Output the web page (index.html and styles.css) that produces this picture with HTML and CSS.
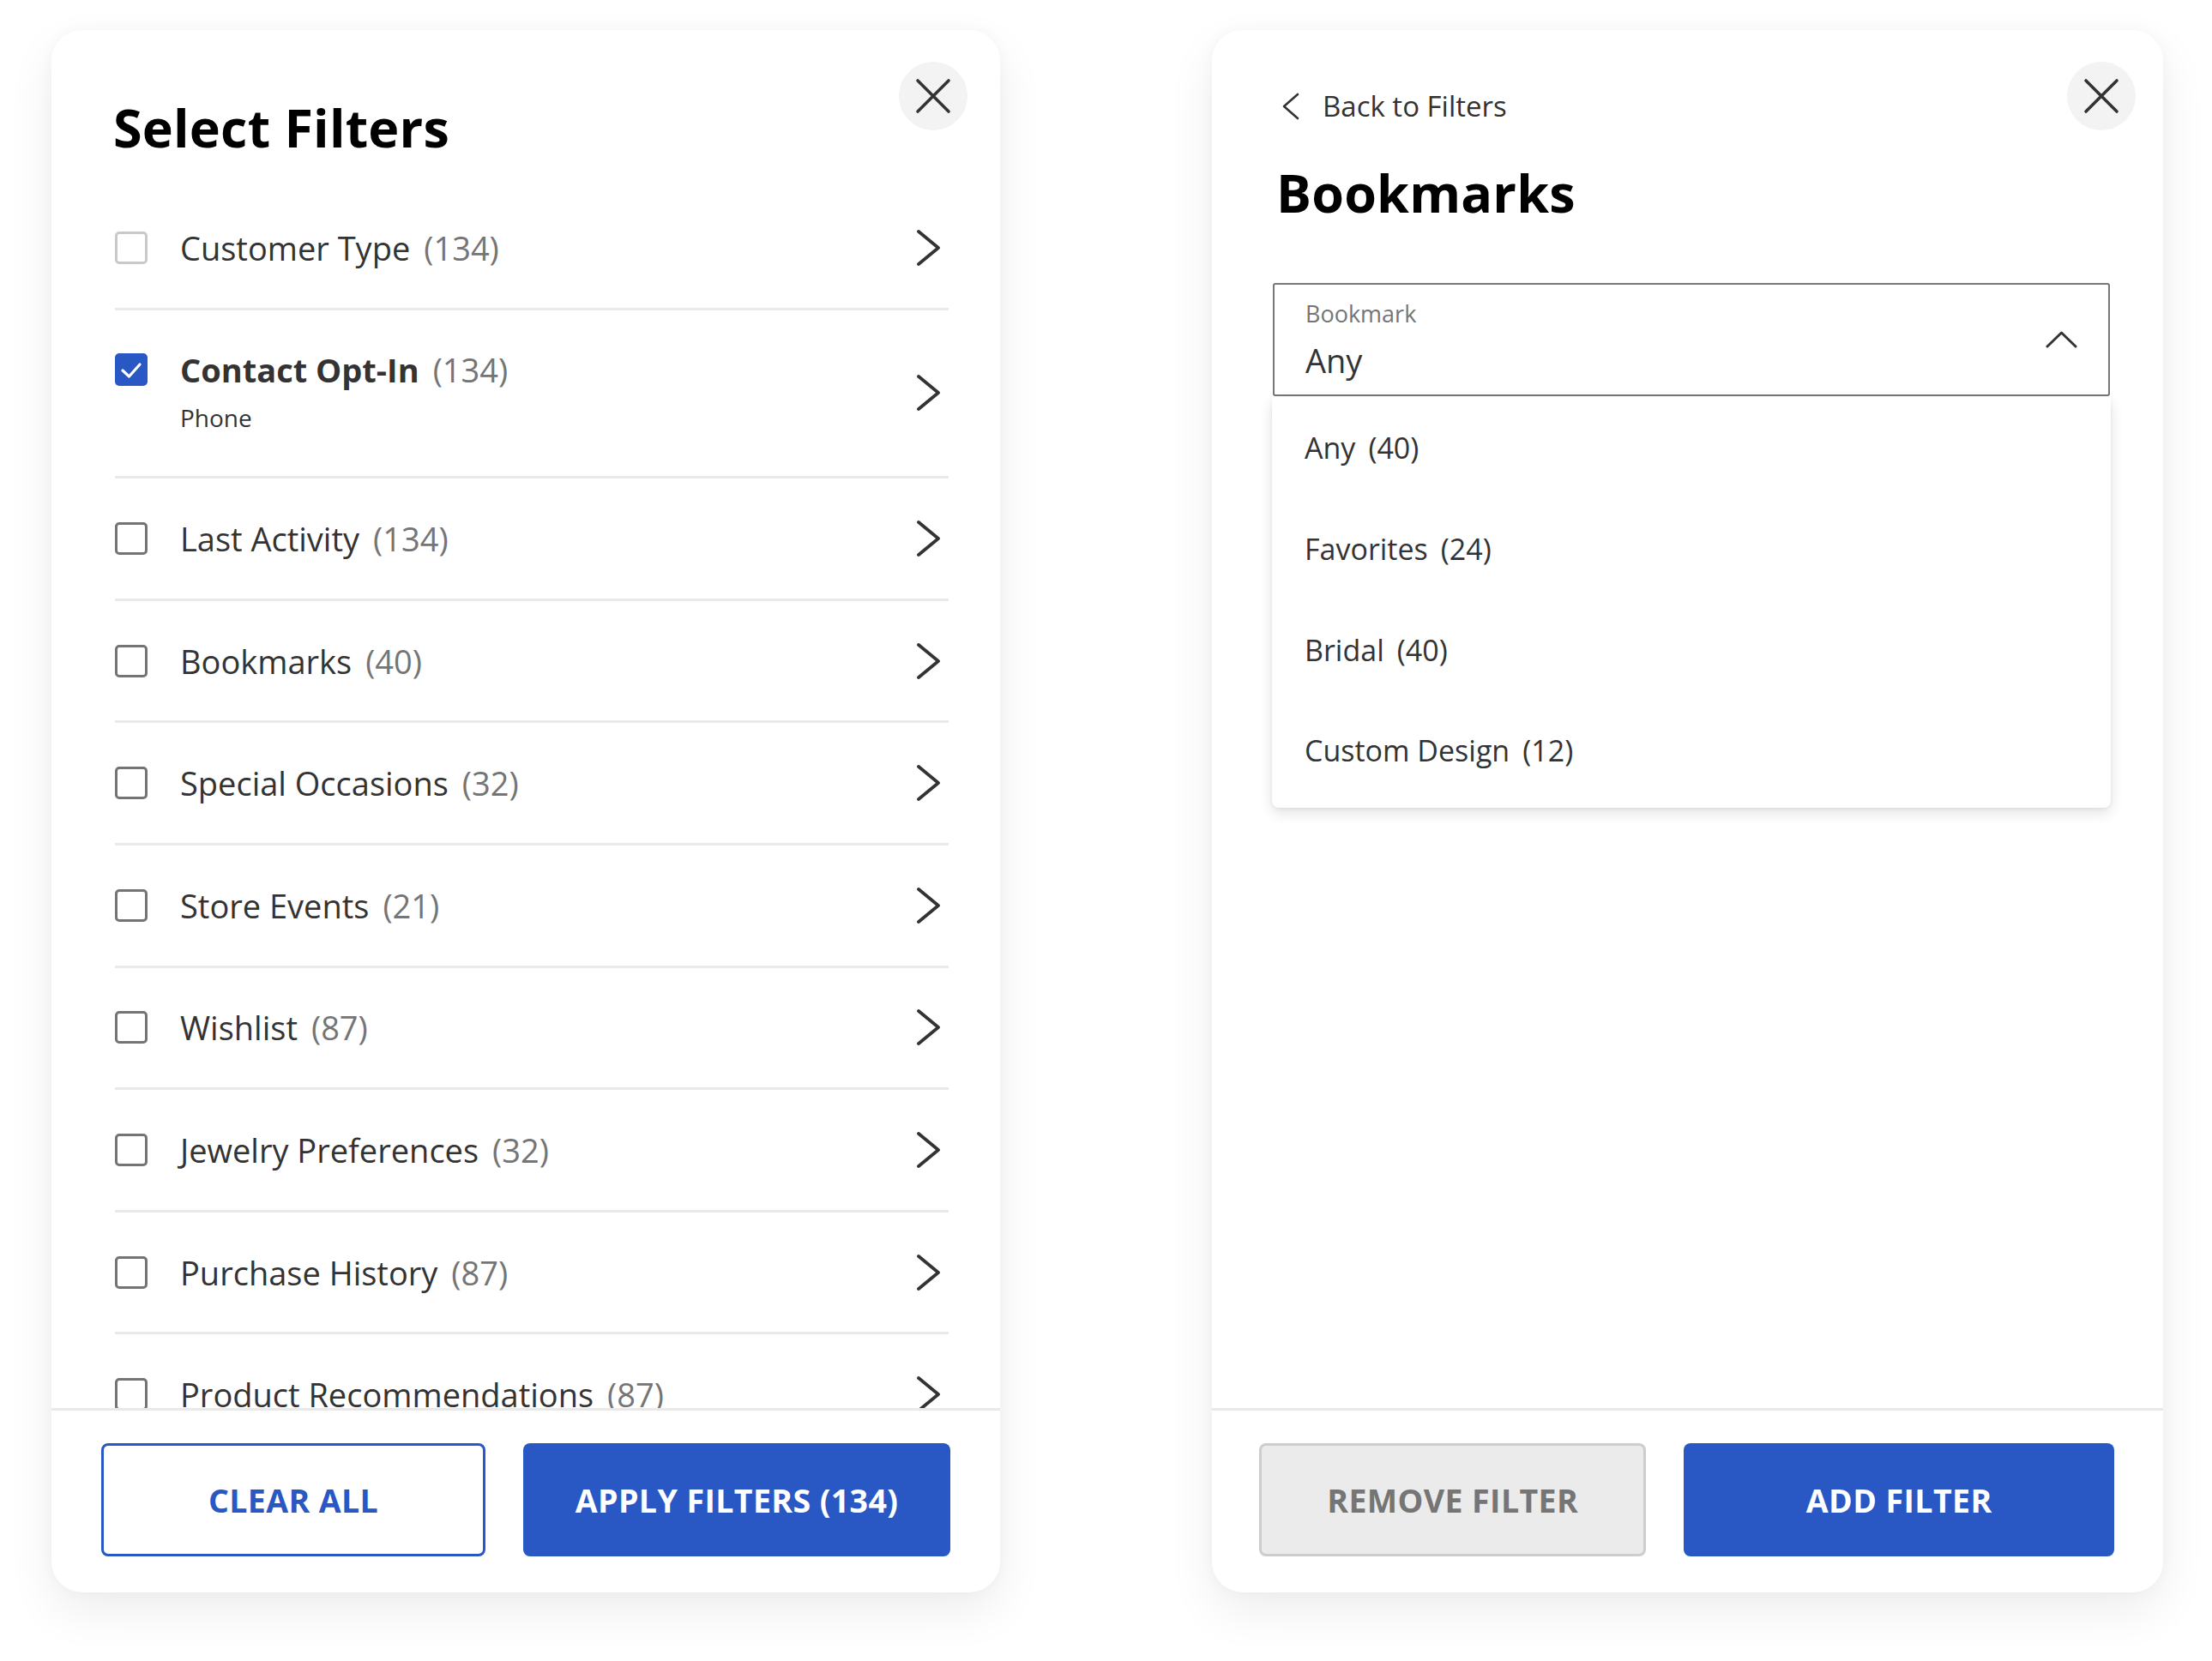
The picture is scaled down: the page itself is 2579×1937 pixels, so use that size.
FILE: index.html
```html
<!DOCTYPE html>
<html lang="en">
<head>
<meta charset="utf-8">
<title>Filters</title>
<link rel="stylesheet" href="styles.css">
</head>
<body>
<div class="stage">
  <section class="panel panel-left">
    <button class="close close-left" aria-label="Close">
      <svg viewBox="0 0 42 42" width="42" height="42"><path d="M3 3 L39 39 M39 3 L3 39" fill="none" stroke="#333" stroke-width="3.6" stroke-linecap="round"/></svg>
    </button>
    <h1 class="title">Select Filters</h1>
    <div class="list">
      <div class="row">
        <span class="cb cb-light"></span>
        <div class="label"><div class="line"><span class="name">Customer Type</span><span class="count">(134)</span></div></div>
        <svg class="chev" viewBox="0 0 30 42" width="30" height="42"><path d="M3 2 L26 21 L3 40" fill="none" stroke="#333" stroke-width="3.8" stroke-linecap="round" stroke-linejoin="round"/></svg>
      </div>
      <div class="row">
        <span class="cb cb-checked"><svg viewBox="0 0 38 38" width="38" height="38"><path d="M9 20 L16.5 27 L29 13" fill="none" stroke="#fff" stroke-width="3.2" stroke-linecap="round" stroke-linejoin="round"/></svg></span>
        <div class="label"><div class="line"><span class="name bold">Contact Opt-In</span><span class="count">(134)</span></div><div class="sub">Phone</div></div>
        <svg class="chev" viewBox="0 0 30 42" width="30" height="42"><path d="M3 2 L26 21 L3 40" fill="none" stroke="#333" stroke-width="3.8" stroke-linecap="round" stroke-linejoin="round"/></svg>
      </div>
      <div class="row">
        <span class="cb"></span>
        <div class="label"><div class="line"><span class="name">Last Activity</span><span class="count">(134)</span></div></div>
        <svg class="chev" viewBox="0 0 30 42" width="30" height="42"><path d="M3 2 L26 21 L3 40" fill="none" stroke="#333" stroke-width="3.8" stroke-linecap="round" stroke-linejoin="round"/></svg>
      </div>
      <div class="row">
        <span class="cb"></span>
        <div class="label"><div class="line"><span class="name">Bookmarks</span><span class="count">(40)</span></div></div>
        <svg class="chev" viewBox="0 0 30 42" width="30" height="42"><path d="M3 2 L26 21 L3 40" fill="none" stroke="#333" stroke-width="3.8" stroke-linecap="round" stroke-linejoin="round"/></svg>
      </div>
      <div class="row">
        <span class="cb"></span>
        <div class="label"><div class="line"><span class="name">Special Occasions</span><span class="count">(32)</span></div></div>
        <svg class="chev" viewBox="0 0 30 42" width="30" height="42"><path d="M3 2 L26 21 L3 40" fill="none" stroke="#333" stroke-width="3.8" stroke-linecap="round" stroke-linejoin="round"/></svg>
      </div>
      <div class="row">
        <span class="cb"></span>
        <div class="label"><div class="line"><span class="name">Store Events</span><span class="count">(21)</span></div></div>
        <svg class="chev" viewBox="0 0 30 42" width="30" height="42"><path d="M3 2 L26 21 L3 40" fill="none" stroke="#333" stroke-width="3.8" stroke-linecap="round" stroke-linejoin="round"/></svg>
      </div>
      <div class="row">
        <span class="cb"></span>
        <div class="label"><div class="line"><span class="name">Wishlist</span><span class="count">(87)</span></div></div>
        <svg class="chev" viewBox="0 0 30 42" width="30" height="42"><path d="M3 2 L26 21 L3 40" fill="none" stroke="#333" stroke-width="3.8" stroke-linecap="round" stroke-linejoin="round"/></svg>
      </div>
      <div class="row">
        <span class="cb"></span>
        <div class="label"><div class="line"><span class="name">Jewelry Preferences</span><span class="count">(32)</span></div></div>
        <svg class="chev" viewBox="0 0 30 42" width="30" height="42"><path d="M3 2 L26 21 L3 40" fill="none" stroke="#333" stroke-width="3.8" stroke-linecap="round" stroke-linejoin="round"/></svg>
      </div>
      <div class="row">
        <span class="cb"></span>
        <div class="label"><div class="line"><span class="name">Purchase History</span><span class="count">(87)</span></div></div>
        <svg class="chev" viewBox="0 0 30 42" width="30" height="42"><path d="M3 2 L26 21 L3 40" fill="none" stroke="#333" stroke-width="3.8" stroke-linecap="round" stroke-linejoin="round"/></svg>
      </div>
      <div class="row">
        <span class="cb"></span>
        <div class="label"><div class="line"><span class="name">Product Recommendations</span><span class="count">(87)</span></div></div>
        <svg class="chev" viewBox="0 0 30 42" width="30" height="42"><path d="M3 2 L26 21 L3 40" fill="none" stroke="#333" stroke-width="3.8" stroke-linecap="round" stroke-linejoin="round"/></svg>
      </div>
    </div>
    <div class="footer footer-left">
      <button class="btn btn-outline">CLEAR ALL</button>
      <button class="btn btn-primary">APPLY FILTERS (134)</button>
    </div>
  </section>

  <section class="panel panel-right">
    <button class="close close-right" aria-label="Close">
      <svg viewBox="0 0 42 42" width="42" height="42"><path d="M3 3 L39 39 M39 3 L3 39" fill="none" stroke="#333" stroke-width="3.6" stroke-linecap="round"/></svg>
    </button>
    <div class="body-right">
      <div class="back">
        <svg class="back-chev" viewBox="0 0 22 32" width="22" height="32"><path d="M19 2 L3 16 L19 30" fill="none" stroke="#333" stroke-width="2.6" stroke-linecap="round" stroke-linejoin="round"/></svg>
        <span>Back to Filters</span>
      </div>
      <h1 class="title title-right">Bookmarks</h1>
      <div class="select-wrap">
        <div class="select">
          <div class="select-text">
            <div class="select-label">Bookmark</div>
            <div class="select-value">Any</div>
          </div>
          <svg class="up-chev" viewBox="0 0 37 20" width="37" height="20"><path d="M2 18 L18.5 2 L35 18" fill="none" stroke="#333" stroke-width="3" stroke-linecap="round" stroke-linejoin="round"/></svg>
        </div>
        <ul class="menu">
          <li class="menu-item">Any<span class="mcount">(40)</span></li>
          <li class="menu-item">Favorites<span class="mcount">(24)</span></li>
          <li class="menu-item">Bridal<span class="mcount">(40)</span></li>
          <li class="menu-item">Custom Design<span class="mcount">(12)</span></li>
        </ul>
      </div>
    </div>
    <div class="footer footer-right">
      <button class="btn btn-disabled">REMOVE FILTER</button>
      <button class="btn btn-primary">ADD FILTER</button>
    </div>
  </section>
</div>
</body>
</html>
```
FILE: styles.css
```css
* { box-sizing: border-box; }
html, body { margin: 0; padding: 0; background: #ffffff; }
body {
  font-family: "Open Sans", "Noto Sans", sans-serif;
  color: #333333;
  width: 2579px;
  height: 1937px;
  overflow: hidden;
}
.stage {
  display: flex;
  align-items: flex-start;
  gap: 247px;
  padding: 35px 57px 0 60px;
}
.panel {
  position: relative;
  background: #ffffff;
  border-radius: 36px;
  height: 1822px;
  display: flex;
  flex-direction: column;
  overflow: hidden;
  box-shadow: 0 22px 56px rgba(0, 0, 0, 0.07), 0 0 18px rgba(0, 0, 0, 0.035);
}
.panel-left { width: 1106px; padding-top: 79px; }
.panel-right { width: 1109px; }

.close {
  position: absolute;
  top: 37px;
  width: 80px;
  height: 80px;
  border-radius: 50%;
  border: none;
  background: #f3f3f3;
  display: flex;
  align-items: center;
  justify-content: center;
  padding: 0;
}
.close-left { right: 38px; }
.close-right { right: 32px; }

.title {
  margin: 0;
  font-size: 61px;
  line-height: 70px;
  font-weight: 700;
  color: #000000;
  padding-left: 72px;
  letter-spacing: 0.2px;
}

.list {
  flex: 1;
  min-height: 0;
  overflow: hidden;
  margin-top: 35px;
  padding: 0 60px 0 74px;
}
.row {
  display: flex;
  align-items: flex-start;
  padding: 43.8px 0;
  border-bottom: 3px solid #e9e9e9;
}
.cb {
  flex: none;
  width: 38px;
  height: 38px;
  margin-top: 7px;
  border: 3px solid #747474;
  border-radius: 5px;
  background: #fff;
}
.cb-light { border-color: #c9c9c9; }
.cb-checked {
  border: none;
  background: #2958c5;
  display: flex;
}
.label { flex: 1; margin-left: 38px; }
.line {
  font-size: 38px;
  line-height: 52px;
  color: #333333;
  white-space: nowrap;
}
.name.bold { font-weight: 700; }
.count { color: #757575; margin-left: 16px; }
.sub {
  font-size: 28px;
  line-height: 40px;
  margin-top: 10px;
  margin-bottom: 4px;
  color: #333333;
}
.chev {
  flex: none;
  align-self: center;
  margin-right: 8px;
}

.footer {
  flex: none;
  border-top: 3px solid #e9e9e9;
  display: grid;
  grid-template-columns: 9fr 10fr;
  column-gap: 44px;
}
.footer-left { padding: 38px 58px 42px 58px; }
.footer-right { padding: 38px 57px 42px 55px; }
.btn {
  height: 132px;
  border-radius: 8px;
  font-family: "Open Sans", "Noto Sans", sans-serif;
  font-size: 37.5px;
  font-weight: 700;
  letter-spacing: 0.4px;
  display: flex;
  align-items: center;
  justify-content: center;
  padding: 0;
}
.btn-outline {
  background: #ffffff;
  border: 3px solid #2958c5;
  color: #2958c5;
}
.btn-primary {
  background: #2958c5;
  border: none;
  color: #ffffff;
}
.btn-disabled {
  background: #ebebeb;
  border: 3px solid #cdcdcd;
  color: #757575;
}

.body-right {
  flex: 1;
  min-height: 0;
  padding: 67px 62px 0 71px;
}
.back {
  display: flex;
  align-items: center;
  font-size: 33px;
  line-height: 44px;
  color: #333333;
  padding-left: 10px;
}
.back-chev { margin-right: 26px; }
.title-right {
  padding-left: 4px;
  margin-top: 44px;
}
.select-wrap {
  position: relative;
  margin-top: 70px;
}
.select {
  height: 132px;
  border: 2px solid #777777;
  border-radius: 3px;
  display: flex;
  align-items: center;
  padding: 0 36px 0 36px;
}
.select-text { flex: 1; padding-top: 2px; }
.select-label {
  font-size: 27px;
  line-height: 36px;
  color: #757575;
}
.select-value {
  font-size: 38px;
  line-height: 52px;
  color: #333333;
  margin-top: 10px;
}
.menu {
  position: absolute;
  top: 100%;
  left: -1px;
  right: -1px;
  margin: 1px 0 0 0;
  padding: 0 0 8px 0;
  list-style: none;
  background: #ffffff;
  border-radius: 0 0 8px 8px;
  box-shadow: 0 6px 16px rgba(0, 0, 0, 0.12), 0 1px 4px rgba(0, 0, 0, 0.06);
}
.menu-item {
  height: 117.7px;
  display: flex;
  align-items: center;
  padding-left: 38px;
  padding-top: 1px;
  font-size: 34px;
  color: #333333;
}
.mcount { margin-left: 15px; }
.up-chev { flex: none; }
```
